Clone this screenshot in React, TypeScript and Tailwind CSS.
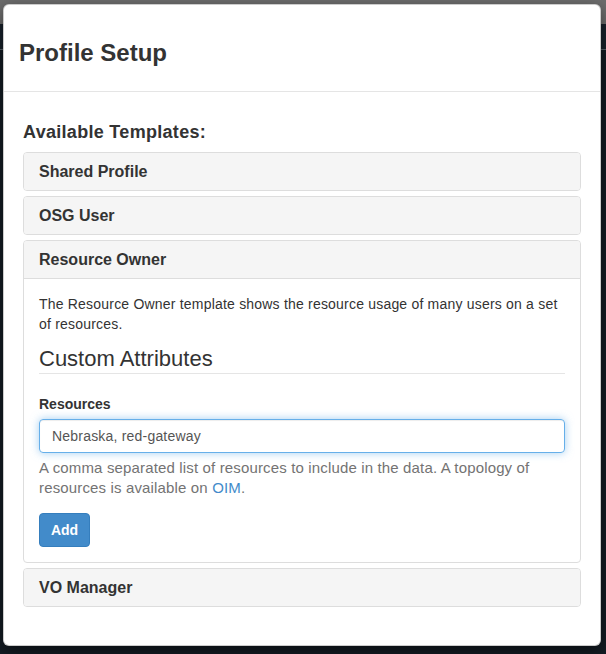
import React from "react";

const font = { fontFamily: '"Liberation Sans", Arial, sans-serif' };

function PanelHeading({ title, open }: { title: string; open?: boolean }) {
  return (
    <div
      className={`bg-[#f5f5f5] px-[15px] py-[10px] ${open ? "border-b border-[#dddddd] rounded-t-[3px]" : "rounded-[3px]"}`}
    >
      <h4 className="m-0 text-[16px] leading-[17px] font-bold text-[#333333]">{title}</h4>
    </div>
  );
}

export default function App() {
  return (
    <div className="relative w-[606px] h-[654px] overflow-hidden bg-[#141c24]" style={font}>
      {/* page behind backdrop */}
      <div className="flex flex-col">
        <div className="h-[24px] bg-[#6d6d6d]" />
        <div className="h-[25px] bg-[#18222c]" />
        <div className="h-px bg-[#59626b]" />
      </div>

      {/* modal */}
      <div className="absolute left-[3px] top-[4px] w-[598px] bg-white border border-black/20 rounded-[6px] shadow-[0_5px_15px_rgba(0,0,0,0.5)] text-[14px] leading-[20px] text-[#333333]">
        <div className="px-[15px] py-[15px] border-b border-[#e5e5e5]">
          <h3 className="mt-[20px] mb-[10px] text-[24px] leading-[1.1] font-bold text-[#333333]">
            Profile Setup
          </h3>
        </div>

        <div className="px-[19px] pt-[31px] pb-[38px]">
          <h4 className="m-0 mb-[9px] text-[18px] leading-[1.1] font-bold tracking-[0.3px]">
            Available Templates:
          </h4>

          <div className="flex flex-col gap-[5px]">
            <div className="border border-[#dddddd] rounded-[4px]">
              <PanelHeading title="Shared Profile" />
            </div>
            <div className="border border-[#dddddd] rounded-[4px]">
              <PanelHeading title="OSG User" />
            </div>
            <div className="border border-[#dddddd] rounded-[4px]">
              <PanelHeading title="Resource Owner" open />
              <div className="p-[15px]">
                <p className="m-0 mb-[10px] tracking-[0.2px]">
                  The Resource Owner template shows the resource usage of many users on a set
                  <br />
                  of resources.
                </p>
                <div className="text-[22px] leading-[29px] border-b border-[#e5e5e5] mb-[20px] text-[#333333]">
                  Custom Attributes
                </div>
                <div className="mb-[15px]">
                  <label className="block font-bold mb-[5px]">Resources</label>
                  <div className="h-[34px] px-[12px] flex items-center border border-[#66afe9] rounded-[4px] shadow-[inset_0_1px_1px_rgba(0,0,0,0.075),0_0_8px_rgba(102,175,233,0.6)] text-[#555555] tracking-[0.2px]">
                    Nebraska, red-gateway
                  </div>
                  <p className="mt-[5px] mb-[10px] text-[#737373] text-[15px] tracking-[0.15px]">
                    A comma separated list of resources to include in the data. A topology of
                    <br />
                    resources is available on <span className="text-[#428bca]">OIM</span>.
                  </p>
                </div>
                <button className="h-[34px] w-[51px] bg-[#428bca] border border-[#357ebd] rounded-[4px] text-white font-bold text-[14px]">
                  Add
                </button>
              </div>
            </div>
            <div className="border border-[#dddddd] rounded-[4px]">
              <PanelHeading title="VO Manager" />
            </div>
          </div>
        </div>
      </div>
    </div>
  );
}
